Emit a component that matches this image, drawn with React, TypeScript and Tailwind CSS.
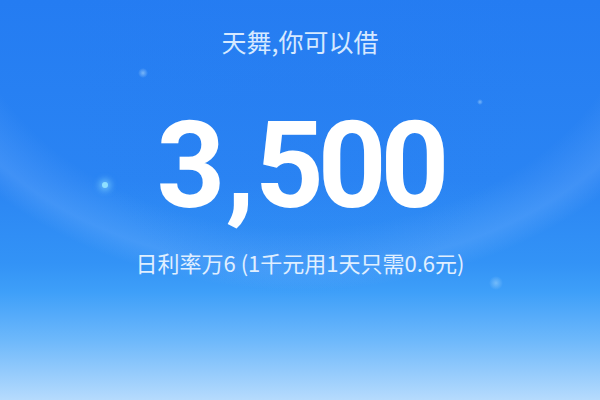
export default function App() {
  return (
    <div className="relative w-[600px] h-[400px] overflow-hidden bg-[linear-gradient(180deg,#247cf2_0%,#2a84f3_45%,#3393f6_66%,#3e9ff9_73%,#6db8fb_85%,#b6dbfd_100%)] font-['Noto_Sans_CJK_SC',sans-serif]">
      {/* big soft arc behind the number */}
      <div className="absolute left-[-120px] top-[-330px] w-[840px] h-[620px] rounded-full bg-[radial-gradient(closest-side,rgba(30,120,245,0)_80%,rgba(120,180,255,0.28)_93%,rgba(120,180,255,0)_100%)]" />
      <div className="absolute left-[60px] top-[-200px] w-[480px] h-[500px] rounded-full bg-[radial-gradient(closest-side,rgba(40,125,240,0.35),rgba(40,125,240,0))]" />

      {/* sparkles */}
      <div className="absolute left-[102px] top-[182px] w-[6px] h-[6px] rounded-full bg-[#8fe0ff] shadow-[0_0_6px_3px_rgba(140,220,255,0.6)]" />
      <div className="absolute left-[138px] top-[68px] w-[10px] h-[10px] rounded-full bg-[radial-gradient(closest-side,rgba(200,235,255,0.5),rgba(200,235,255,0))]" />
      <div className="absolute left-[477px] top-[99px] w-[6px] h-[6px] rounded-full bg-[radial-gradient(closest-side,rgba(200,235,255,0.5),rgba(200,235,255,0))]" />
      <div className="absolute left-[489px] top-[276px] w-[14px] h-[14px] rounded-full bg-[radial-gradient(closest-side,rgba(200,235,255,0.4),rgba(200,235,255,0))]" />

      <div className="relative flex flex-col items-center">
        <div className="mt-[21px] text-[25px] leading-[40px] text-[#d6e9ff]">天舞,你可以借</div>
        <div className="mt-[45px] flex font-['Roboto',sans-serif] font-bold text-[120px] leading-none tracking-[-6px] text-white">
          <span>3</span>
          <span className="mx-[6px]">,</span>
          <span>500</span>
        </div>
        <div className="mt-[23px] text-[22px] leading-[26px] text-[#e0efff]">
          日利率万6 (1千元用1天只需0.6元)
        </div>
      </div>
    </div>
  );
}
